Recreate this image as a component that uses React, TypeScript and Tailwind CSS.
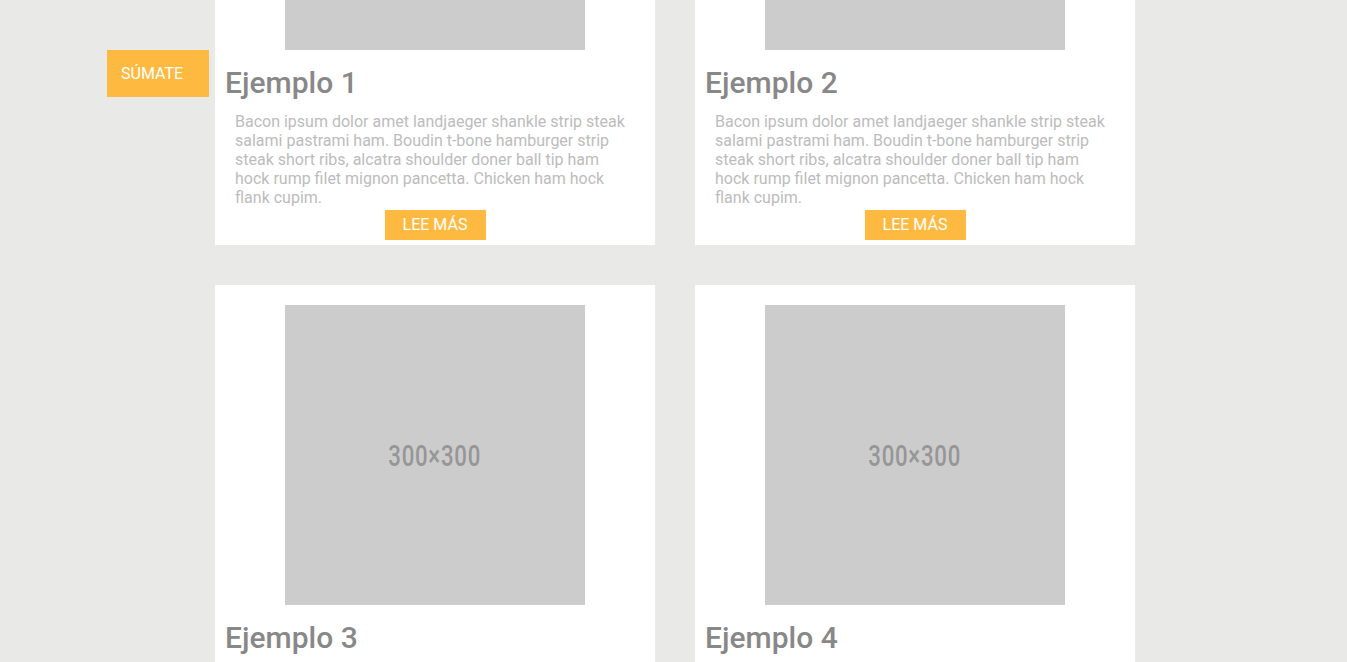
import React from "react";

const posts = [
  { id: 1, title: "Ejemplo 1" },
  { id: 2, title: "Ejemplo 2" },
  { id: 3, title: "Ejemplo 3" },
  { id: 4, title: "Ejemplo 4" },
];

const text =
  "Bacon ipsum dolor amet landjaeger shankle strip steak salami pastrami ham. Boudin t-bone hamburger strip steak short ribs, alcatra shoulder doner ball tip ham hock rump filet mignon pancetta. Chicken ham hock flank cupim.";

const Card = ({ title }: { title: string }) => (
  <div className="bg-white w-[440px] pt-5 pb-[5px] flex flex-col">
    {/* Placeholder image */}
    <div className="mx-auto w-[300px] h-[300px] bg-[#cccccc] flex items-center justify-center">
      <span className="inline-block scale-x-[0.74] text-[30px] font-medium text-[#969696] tracking-[1px]">
        300×300
      </span>
    </div>
    <h2 className="mt-[15px] px-[10px] text-[30px] leading-[35px] font-medium text-[#888888]">
      {title}
    </h2>
    <p className="mt-[12px] px-5 w-[430px] text-[16px] leading-[19px] text-[#bcbcbc]">
      {text}
    </p>
    <div className="mt-[3px] flex justify-center">
      <button className="w-[101px] h-[30px] bg-[#fdb940] text-white text-[16px] uppercase">
        Lee más
      </button>
    </div>
  </div>
);

export default function App() {
  return (
    <div className="w-full h-screen overflow-hidden bg-[#e9e9e7] font-['Roboto',sans-serif]">
      {/* Floating join button */}
      <button className="fixed left-[107px] top-[50px] w-[102px] h-[47px] pl-[14px] pt-[1px] text-left bg-[#fdb940] text-white text-[16px] uppercase">
        Súmate
      </button>

      <div className="mt-[-270px] ml-[215px] grid grid-cols-[440px_440px] gap-10">
        {posts.map((p) => (
          <Card key={p.id} title={p.title} />
        ))}
      </div>
    </div>
  );
}
